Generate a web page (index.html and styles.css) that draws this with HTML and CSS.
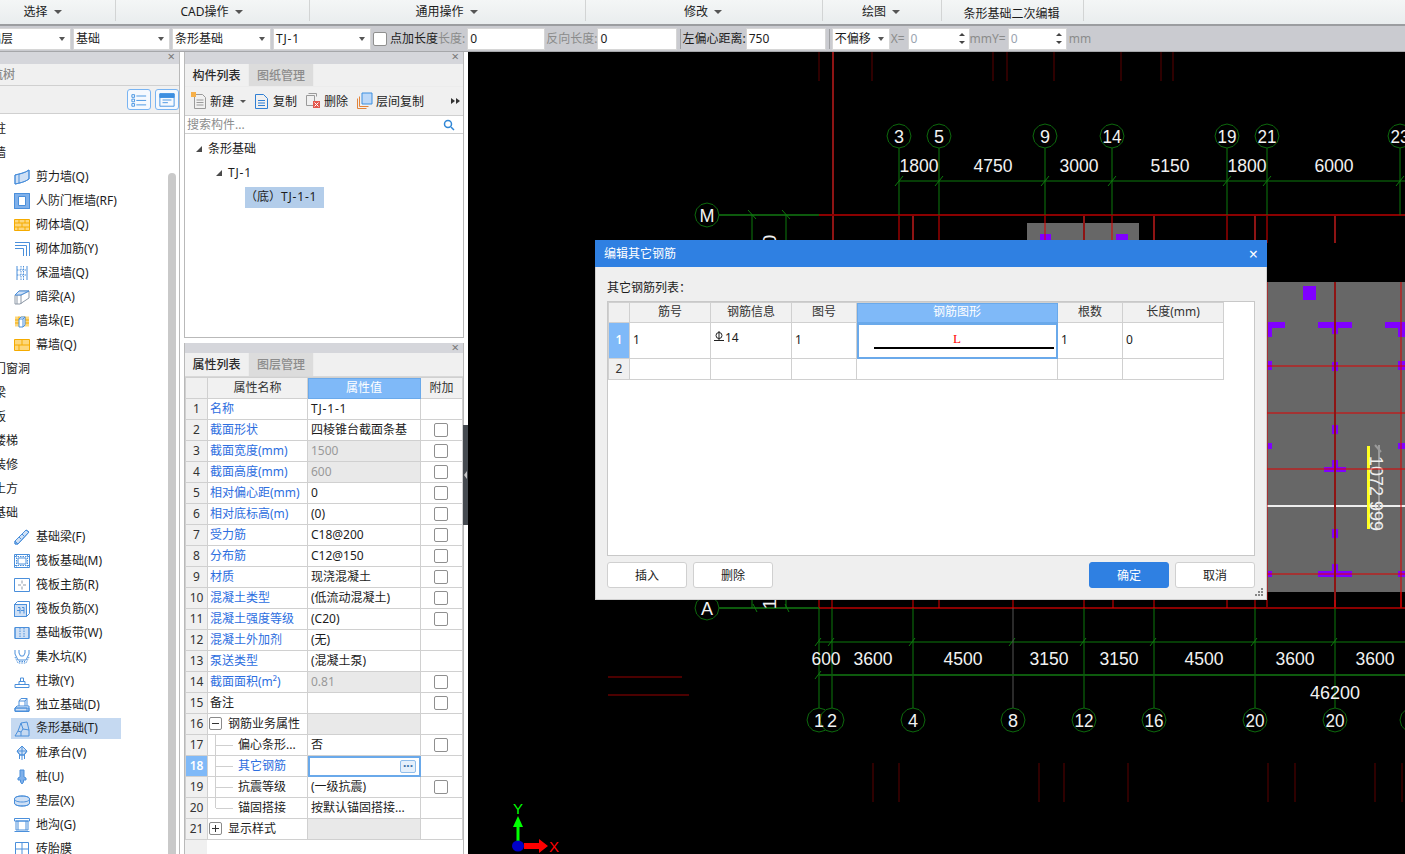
FILE: index.html
```html
<!DOCTYPE html>
<html lang="zh">
<head>
<meta charset="utf-8">
<title>编辑其它钢筋</title>
<link rel="stylesheet" href="styles.css">
</head>
<body>
<div class="app">
  <header class="ribbon">
    <div class="rib first">选择<i class="caret"></i></div>
    <div class="rib">CAD操作<i class="caret"></i></div>
    <div class="rib">通用操作<i class="caret"></i></div>
    <div class="rib">修改<i class="caret"></i></div>
    <div class="rib">绘图<i class="caret"></i></div>
    <div class="rib low">条形基础二次编辑</div>
    <div></div>
  </header>

  <div class="tools">
    <div class="combo c1"><span>基础层</span><i class="caret"></i></div>
    <div class="combo c2"><span>基础</span><i class="caret"></i></div>
    <div class="combo c2"><span>条形基础</span><i class="caret"></i></div>
    <div class="combo c2"><span class="tj">TJ-1</span><i class="caret"></i></div>
    <span class="check tchk"></span>
    <span class="lbl">点加长度</span>
    <span class="lbl mute tight">长度:</span>
    <div class="input i78">0</div>
    <span class="lbl mute">反向长度:</span>
    <div class="input i80">0</div>
    <span class="vsep"></span>
    <span class="lbl tight">左偏心距离:</span>
    <div class="input i80">750</div>
    <span class="vsep"></span>
    <div class="combo c58"><span>不偏移</span><i class="caret"></i></div>
    <span class="lbl mute tight">X=</span>
    <div class="input spin s62"><span>0</span><b class="arrows"><i></i><i></i></b></div>
    <span class="lbl mute tight">mmY=</span>
    <div class="input spin s60"><span>0</span><b class="arrows"><i></i><i></i></b></div>
    <span class="lbl mute mm">mm</span>
  </div>

  <div class="main">
    <aside class="left">
      <div class="strip"><span class="x">×</span></div>
      <div class="ltab"><span>导航树</span></div>
      <div class="ltools">
        <span class="tbtn"><svg viewBox="0 0 20 18"><path d="M2 3h3v3H2zM2 8h3v3H2zM2 13h3v3H2zM7 4.500h11M7 9.500h11M7 14.500h11"/></svg></span>
        <span class="tbtn"><svg viewBox="0 0 20 18"><path d="M2 2h16v14H2zM2 6h16M5 9h10M5 12h6"/><path class="fill" d="M2 2h16v4H2z"/></svg></span>
      </div>
      <div class="tree">
        <div class="cat"><span>柱</span></div>
        <div class="cat"><span>墙</span></div>
        <div class="it"><svg class="ico" viewBox="0 0 16 16"><path class="lf" d="M1 6C5 5 11 4 15 1v9c-4 3-9 4-14 5z"/><path d="M1 6C5 5 11 4 15 1v9c-4 3-9 4-14 5zM5 5v9"/></svg>剪力墙(Q)</div>
        <div class="it"><svg class="ico" viewBox="0 0 16 16"><path class="mf" d="M.5.500h15v15H.5z"/><path d="M.5.500h15v15H.5z"/><path class="wf" d="M4.500 3.500h7v9h-7z"/></svg>人防门框墙(RF)</div>
        <div class="it"><svg class="ico" viewBox="0 0 16 16"><path class="of" d="M.5 2.500h15v11H.5z"/><path class="ow" d="M.5 2.500h15v11H.5zM1 6h14M1 10h14M5 2.500V6M11 2.500V6M8 6v4M4 10v3.500M11 10v3.500"/></svg>砌体墙(Q)</div>
        <div class="it"><svg class="ico" viewBox="0 0 16 16"><path d="M1 1.500h14.500V15M1 4.500h11.500V15M1 7.500h8.500V15" /></svg>砌体加筋(Y)</div>
        <div class="it"><svg class="ico" viewBox="0 0 16 16"><path d="M3 1v14M13 1v14"/><path class="dot" d="M7 1v14M9.500 1v14M3 5h10M3 10h10"/></svg>保温墙(Q)</div>
        <div class="it"><svg class="ico" viewBox="0 0 16 16"><path class="gy" d="M1 6l4-4h10v7l-9 6H1zM1 6h6l8-4M7 6v9M3 6v9"/><path class="lf" d="M1 6l4-4h10L7 6z"/></svg>暗梁(A)</div>
        <div class="it"><svg class="ico" viewBox="0 0 16 16"><path class="of" d="M1 3.500h14v10H1z"/><path class="ow" d="M1 7h14M1 10h14M5 3.500V7M11 3.500V7"/><path class="wf" d="M5 6l2-2h4v8l-2 2H5z"/><path d="M5 6h4v8M9 6l2-2"/></svg>墙垛(E)</div>
        <div class="it"><svg class="ico" viewBox="0 0 16 16"><path class="of" d="M.5 2.500h15v11H.5z"/><path class="ow" d="M.5 2.500h15v11H.5zM1 8h14M8 2.500V8M5 8v5.500"/></svg>幕墙(Q)</div>
        <div class="cat"><span>门窗洞</span></div>
        <div class="cat"><span>梁</span></div>
        <div class="cat"><span>板</span></div>
        <div class="cat"><span>楼梯</span></div>
        <div class="cat"><span>装修</span></div>
        <div class="cat"><span>土方</span></div>
        <div class="cat"><span>基础</span></div>
        <div class="it"><svg class="ico" viewBox="0 0 16 16"><path class="lf" d="M1 12L12 1l3 2L4 15H1z"/><path d="M1 12L12 1l3 2L4 15H1zM1 12l3 3M5 8l2 2M8 5l2 2"/></svg>基础梁(F)</div>
        <div class="it"><svg class="ico" viewBox="0 0 16 16"><path d="M.5 1.500h15v13H.5zM4 5h8v6H4z"/><path class="dot" d="M1 3.500h14M1 12.500h14M2.500 2v12M13.500 2v12"/></svg>筏板基础(M)</div>
        <div class="it"><svg class="ico" viewBox="0 0 16 16"><path d="M.5 1.500h15v13H.5z"/><path class="gy" d="M8 3.500v3M8 9.500v3M4 8h3M9 8h3"/></svg>筏板主筋(R)</div>
        <div class="it"><svg class="ico" viewBox="0 0 16 16"><path class="lf" d="M.5 3.500h12v12H.5z"/><path d="M.5 3.500h12v12H.5zM.5 3.500l3-3h12v12l-3 3M4 6.500h2v6M6 9.500H3M8 6.500h2v6M10 9.500H7"/></svg>筏板负筋(X)</div>
        <div class="it"><svg class="ico" viewBox="0 0 16 16"><path class="lf" d="M1 2.500h14v11H1z"/><path d="M1 2.500h14v11H1z"/><path class="dot" d="M6 3v10M10 3v10"/></svg>基础板带(W)</div>
        <div class="it"><svg class="ico" viewBox="0 0 16 16"><path d="M1 1v4l3 6h8l3-6V1M5 1v3l1.500 3h3L11 4V1"/><path class="dot" d="M1 8l3 6h8l3-6M5 12.500h6"/></svg>集水坑(K)</div>
        <div class="it"><svg class="ico" viewBox="0 0 16 16"><path d="M1 11.500h14v3H1zM5 11.500V8.500h6v3M6.500 8.500V5h3v3.500"/></svg>柱墩(Y)</div>
        <div class="it"><svg class="ico" viewBox="0 0 16 16"><path class="lf" d="M1 14V11h14v3z"/><path d="M1 14.500V11l2-2h12v5.500zM1 11h12v3.500M5 9V4l2-2.500h6V9M5 4h6v5M11 4l2-2.500"/></svg>独立基础(D)</div>
        <div class="it sel"><svg class="ico" viewBox="0 0 16 16"><path d="M1 15l3-5 3-8 6-1 2 8v6zM7 2l2 6-2 3v4M4 10l3 1M9 8l6 1"/></svg>条形基础(T)</div>
        <div class="it"><svg class="ico" viewBox="0 0 16 16"><path class="lf" d="M8 1l5 5-3 4H6L3 6z"/><path d="M8 1l5 5-3 4H6L3 6zM3 6h10M8 1v14M5.500 10v4M10.500 10v4"/></svg>桩承台(V)</div>
        <div class="it"><svg class="ico" viewBox="0 0 16 16"><path class="mf" d="M6 1h4v7l2 1v2H9.500v2L8 15l-1.500-2v-2H4V9l2-1z"/></svg>桩(U)</div>
        <div class="it"><svg class="ico" viewBox="0 0 16 16"><path class="lf" d="M.5 6C.5 4 4 3 8 3s7.500 1 7.500 3v4c0 2-3.500 3-7.500 3S.5 12 .5 10z"/><path d="M.5 6C.5 4 4 3 8 3s7.500 1 7.500 3v4c0 2-3.500 3-7.500 3S.5 12 .5 10zM.5 6c0 2 3.500 3 7.500 3s7.500-1 7.500-3"/></svg>垫层(X)</div>
        <div class="it"><svg class="ico" viewBox="0 0 16 16"><path d="M.5 14.500h15M2 13V4h12v9H2M.5 4V1.500h15V4H.5M4 4v9M12 4v9"/></svg>地沟(G)</div>
        <div class="it"><svg class="ico" viewBox="0 0 16 16"><path d="M1.500 1.500h13v13h-13zM8 1.500v13M1.500 8h13"/></svg>砖胎膜</div>
      </div>
      <div class="lscroll"></div>
    </aside>

    <div class="mid">
      <section class="panel p1">
        <div class="strip"><span class="x">×</span></div>
        <div class="tabs"><span class="tab on">构件列表</span><span class="tab">图纸管理</span></div>
        <div class="mtools">
          <span class="mt m1"><svg class="tico" viewBox="0 0 16 18"><path class="dw" d="M3.500 2.500h8l3 3v11h-11zM5.500 8h7M5.500 10.500h7M5.500 13h7"/><path class="star" d="M0 0h5v5H0z"/></svg>新建<i class="caret"></i></span>
          <span class="mt m2"><svg class="tico" viewBox="0 0 16 18"><path class="bl" d="M1.500 2.500h8l4 4v10h-12zM4 8.500h7M4 11h7M4 13.500h7"/></svg>复制</span>
          <span class="mt m3"><svg class="tico" viewBox="0 0 16 18"><path class="dw" d="M1.500 3.500h8v10h-8zM3.500 1.500h8v3"/><path class="redbox" d="M8 9h7v7H8z"/><path class="wl" d="M9.500 10.500l4 4M13.500 10.500l-4 4"/></svg>删除</span>
          <span class="mt m4"><svg class="tico" viewBox="0 0 16 18"><path class="org" d="M.5 6.500v10h9M2.500 4.500v10h9"/><path class="lb" d="M5 1h10v11H5z"/></svg>层间复制</span>
          <span class="more"><i></i><i></i></span>
        </div>
        <div class="search"><span>搜索构件...</span><svg class="mag" viewBox="0 0 12 12"><circle cx="5" cy="5" r="3.500"/><path d="M8 8l3 3"/></svg></div>
        <div class="mtree">
          <div class="tn l1"><i class="tri"></i>条形基础</div>
          <div class="tn l2"><i class="tri"></i><span class="tj">TJ-1</span></div>
          <div class="tn l3"><span class="picked">（底）<span class="tj">TJ-1-1</span></span></div>
        </div>
      </section>

      <section class="panel p2">
        <div class="strip s2"><span class="x">×</span></div>
        <div class="tabs t2"><span class="tab on">属性列表</span><span class="tab">图层管理</span></div>
        <div class="twrap">
          <table class="grid props">
            <colgroup><col class="a"><col class="b"><col class="c"><col class="d"></colgroup>
            <thead><tr><th class="no"></th><th>属性名称</th><th class="hot">属性值</th><th>附加</th></tr></thead>
            <tbody>
              <tr><td class="no">1</td><td class="nm">名称</td><td class="tj">TJ-1-1</td><td></td></tr>
              <tr><td class="no">2</td><td class="nm">截面形状</td><td>四棱锥台截面条基</td><td class="ck"><span class="check"></span></td></tr>
              <tr><td class="no">3</td><td class="nm">截面宽度(mm)</td><td class="ro">1500</td><td class="ck"><span class="check"></span></td></tr>
              <tr><td class="no">4</td><td class="nm">截面高度(mm)</td><td class="ro">600</td><td class="ck"><span class="check"></span></td></tr>
              <tr><td class="no">5</td><td class="nm">相对偏心距(mm)</td><td>0</td><td class="ck"><span class="check"></span></td></tr>
              <tr><td class="no">6</td><td class="nm">相对底标高(m)</td><td>(0)</td><td class="ck"><span class="check"></span></td></tr>
              <tr><td class="no">7</td><td class="nm">受力筋</td><td>C18@200</td><td class="ck"><span class="check"></span></td></tr>
              <tr><td class="no">8</td><td class="nm">分布筋</td><td>C12@150</td><td class="ck"><span class="check"></span></td></tr>
              <tr><td class="no">9</td><td class="nm">材质</td><td>现浇混凝土</td><td class="ck"><span class="check"></span></td></tr>
              <tr><td class="no">10</td><td class="nm">混凝土类型</td><td>(低流动混凝土)</td><td class="ck"><span class="check"></span></td></tr>
              <tr><td class="no">11</td><td class="nm">混凝土强度等级</td><td>(C20)</td><td class="ck"><span class="check"></span></td></tr>
              <tr><td class="no">12</td><td class="nm">混凝土外加剂</td><td>(无)</td><td></td></tr>
              <tr><td class="no">13</td><td class="nm">泵送类型</td><td>(混凝土泵)</td><td></td></tr>
              <tr><td class="no">14</td><td class="nm">截面面积(m²)</td><td class="ro">0.81</td><td class="ck"><span class="check"></span></td></tr>
              <tr><td class="no">15</td><td class="plain">备注</td><td></td><td class="ck"><span class="check"></span></td></tr>
              <tr><td class="no">16</td><td class="grp"><i class="pm minus"></i>钢筋业务属性</td><td class="ro"></td><td></td></tr>
              <tr><td class="no">17</td><td class="kid">偏心条形...</td><td>否</td><td class="ck"><span class="check"></span></td></tr>
              <tr><td class="no act">18</td><td class="kid nm">其它钢筋</td><td class="cur"><span class="dots">···</span></td><td></td></tr>
              <tr><td class="no">19</td><td class="kid">抗震等级</td><td>(一级抗震)</td><td class="ck"><span class="check"></span></td></tr>
              <tr><td class="no">20</td><td class="kid end">锚固搭接</td><td>按默认锚固搭接...</td><td></td></tr>
              <tr><td class="no">21</td><td class="grp"><i class="pm plus"></i>显示样式</td><td class="ro"></td><td></td></tr>
            </tbody>
          </table>
        </div>
      </section>
    </div>

    <div class="split"><span class="handle"></span></div>

    <div class="canvas">
      <svg class="cad" viewBox="468 52 937 802">
        <defs>
          <polygon id="bub" points="0,-12 6,-10.400 10.400,-6 12,0 10.400,6 6,10.400 0,12 -6,10.400 -10.400,6 -12,0 -10.400,-6 -6,-10.400"/>
        </defs>
        <path class="dk" d="M819 52v29M872 52v29M993 52v29M1007 52v29M1054 52v29M1121 52v29M1161 52v29M1173 52v29M873 763v39M899 763v39M1039 763v39M1064 763v39M1128 763v39M1268 763v39M1295 763v39M1375 763v39M1402 763v39"/>
        <path class="dk2" d="M608 677h74M608 695h81"/>
        <path class="rd" d="M833 52v190"/>
        <rect class="gray" x="1027" y="223" width="112" height="20"/>
        <rect class="gray" x="1267" y="282" width="138" height="310"/>
        <path class="pur" d="M1040 234h11v8h-11zM1116 234h12v8h-12zM1303 286h13v14h-13zM1268 322h17v6h-13v9h-4zM1318 322h34v6h-14v6h-6v-6h-14zM1385 322h20v15h-7v-9h-13zM1332 362h6v9h-6zM1268 361h4v9h-4zM1398 361h7v9h-7zM1332 425h6v9h-6zM1268 443h4v6h-4zM1398 443h7v6h-7zM1332 460h6v7h8v5h-22v-5h8zM1332 529h6v9h-6zM1332 564h6v7h14v6h-34v-6h14zM1268 571h4v6h-4zM1398 571h7v6h-7z"/>
        <path class="wht" d="M1267 506h138"/>
        <path class="yel" d="M1368.500 446v83"/>
        <path class="gyl" d="M1379 445v85M1375 445l6 7M1375 529l6-5"/>
        <text class="rot" transform="translate(1370 456) rotate(90)" textLength="75" lengthAdjust="spacingAndGlyphs">1072 999</text>
        <path class="r" d="M1267 282v326M1401 282v326M1267 366h138M1267 413h138M1267 469h138M1267 574h138M899 215v28M939 215v28M1045 215v28M1112 215v28M1227 215v28M1267 215v28"/>
        <path class="rd" d="M913 215v28M1084 215v28M1154 215v28M1255 215v28M1335 215v28M1335 282v326"/>
        <path class="rt" d="M819 215h586M819 608h586"/>
        <path class="r" d="M819 600v8M832 600v8M913 600v8M939 600v8M1013 600v8M1084 600v8M1113 600v8M1154 600v8M1227 600v8M1255 600v8M1335 600v8M1401 592v16"/>
        <path class="g" d="M899 148v67M939 148v67M1045 148v67M1112 148v67M1227 148v67M1267 148v67M1400 148v67M899 181h506M895 186l8-10M935 186l8-10M1041 186l8-10M1108 186l8-10M1223 186l8-10M1263 186l8-10M1396 186l8-10"/>
        <path class="gt" d="M719 215h100M719 608h100"/>
        <path class="g" d="M752 215v30M786 215v30M748 210l8 9M782 210l8 9M752 598v10M786 598v10M753 604l4 8M785 604l4 8"/>
        <path class="g" d="M819 608v100M832 608v100M913 608v100M1084 608v100M1154 608v100M1255 608v100M1335 608v100M819 642h586M815 646l6-8M828 646l6-8M909 646l6-8M1009 646l6-8M1080 646l6-8M1150 646l6-8M1251 646l6-8M1331 646l6-8M815 679l6-8"/>
        <path class="gf" d="M1013 608v100"/>
        <path class="gt" d="M819 675h586"/>
        <g class="bubs">
          <use href="#bub" x="899" y="136"/><use href="#bub" x="939" y="136"/><use href="#bub" x="1045" y="136"/><use href="#bub" x="1112" y="136"/><use href="#bub" x="1227" y="136"/><use href="#bub" x="1267" y="136"/><use href="#bub" x="1400" y="136"/>
          <use href="#bub" x="707" y="215"/><use href="#bub" x="707" y="608"/>
          <use href="#bub" x="819" y="720"/><use href="#bub" x="832" y="720"/><use href="#bub" x="913" y="720"/><use href="#bub" x="1013" y="720"/><use href="#bub" x="1084" y="720"/><use href="#bub" x="1154" y="720"/><use href="#bub" x="1255" y="720"/><use href="#bub" x="1335" y="720"/><use href="#bub" x="1412" y="720"/>
        </g>
        <g class="ct">
          <g class="nar">
          <text x="899" y="143">3</text><text x="939" y="143">5</text><text x="1045" y="143">9</text><text x="1112" y="143" textLength="19" lengthAdjust="spacingAndGlyphs">14</text><text x="1227" y="143" textLength="19" lengthAdjust="spacingAndGlyphs">19</text><text x="1267" y="143" textLength="19" lengthAdjust="spacingAndGlyphs">21</text><text x="1400" y="143" textLength="19" lengthAdjust="spacingAndGlyphs">23</text>
          <text x="707" y="222">M</text><text x="707" y="615">A</text>
          <text x="819" y="727">1</text><text x="832" y="727">2</text><text x="913" y="727">4</text><text x="1013" y="727">8</text><text x="1084" y="727" textLength="19" lengthAdjust="spacingAndGlyphs">12</text><text x="1154" y="727" textLength="19" lengthAdjust="spacingAndGlyphs">16</text><text x="1255" y="727" textLength="19" lengthAdjust="spacingAndGlyphs">20</text><text x="1335" y="727" textLength="19" lengthAdjust="spacingAndGlyphs">20</text>
          </g>
          <text x="919" y="172" textLength="39" lengthAdjust="spacingAndGlyphs">1800</text><text x="993" y="172" textLength="39" lengthAdjust="spacingAndGlyphs">4750</text><text x="1079" y="172" textLength="39" lengthAdjust="spacingAndGlyphs">3000</text><text x="1170" y="172" textLength="39" lengthAdjust="spacingAndGlyphs">5150</text><text x="1247" y="172" textLength="39" lengthAdjust="spacingAndGlyphs">1800</text><text x="1334" y="172" textLength="39" lengthAdjust="spacingAndGlyphs">6000</text>
          <text x="826" y="665" textLength="29" lengthAdjust="spacingAndGlyphs">600</text><text x="873" y="665" textLength="39" lengthAdjust="spacingAndGlyphs">3600</text><text x="963" y="665" textLength="39" lengthAdjust="spacingAndGlyphs">4500</text><text x="1049" y="665" textLength="39" lengthAdjust="spacingAndGlyphs">3150</text><text x="1119" y="665" textLength="39" lengthAdjust="spacingAndGlyphs">3150</text><text x="1204" y="665" textLength="39" lengthAdjust="spacingAndGlyphs">4500</text><text x="1295" y="665" textLength="39" lengthAdjust="spacingAndGlyphs">3600</text><text x="1375" y="665" textLength="39" lengthAdjust="spacingAndGlyphs">3600</text>
          <text x="1335" y="699" textLength="50" lengthAdjust="spacingAndGlyphs">46200</text>
          <text transform="translate(776 240) rotate(-90)">0</text>
          <text transform="translate(776 604) rotate(-90)">1</text>
        </g>
        <path class="ax-g" d="M518 842V826"/>
        <path class="ax-gf" d="M518 816l5 11h-10z"/>
        <path class="ax-rf" d="M524 843h15v-4l9 7-9 7v-4h-15z"/>
        <ellipse class="ax-b" cx="518" cy="846" rx="6" ry="5.500"/>
        <text class="ax-y" x="518" y="814">Y</text>
        <text class="ax-x" x="549" y="852">X</text>
      </svg>
    </div>
  </div>

  <div class="dialog">
    <div class="dtitle"><span>编辑其它钢筋</span><span class="dclose">×</span></div>
    <div class="dbody">
      <div class="dlabel">其它钢筋列表：</div>
      <div class="dbox">
        <table class="grid rebar">
          <colgroup><col class="r0"><col class="r1"><col class="r2"><col class="r3"><col class="r4"><col class="r5"><col class="r6"></colgroup>
          <thead><tr><th class="no"></th><th>筋号</th><th>钢筋信息</th><th>图号</th><th class="hot">钢筋图形</th><th>根数</th><th>长度(mm)</th></tr></thead>
          <tbody>
            <tr class="tall"><td class="no act">1</td><td>1</td><td class="barcell"><svg class="bar" viewBox="0 0 10 11"><circle cx="5" cy="4.500" r="3"/><path d="M5 0v9M0 9.500h10"/></svg>14</td><td>1</td>
              <td class="cur shape"><span class="shape-l">L</span><span class="shape-line"></span></td><td>1</td><td>0</td></tr>
            <tr><td class="no">2</td><td></td><td></td><td></td><td></td><td></td><td></td></tr>
          </tbody>
        </table>
      </div>
      <div class="dbtns">
        <span class="btn">插入</span><span class="btn">删除</span>
        <span class="grow"></span>
        <span class="btn pri">确定</span><span class="btn">取消</span>
      </div>
    </div>
    <svg class="grip" viewBox="0 0 9 9"><path d="M6 0h2v2H6zM3 3h2v2H3zM6 3h2v2H6zM0 6h2v2H0zM3 6h2v2H3zM6 6h2v2H6z"/></svg>
  </div>
</div>
</body>
</html>
```
FILE: styles.css
```css
* { box-sizing: border-box; }
html, body { margin: 0; padding: 0; }
body { font: 12px/1.2 "Noto Sans", "Noto Sans CJK SC", sans-serif; color: #1c1c1c; background: #000; }
.app { position: relative; width: 1405px; height: 854px; overflow: hidden; display: flex; flex-direction: column; }
.tj { letter-spacing: .8px; }

.caret { display: inline-block; width: 0; height: 0; border-left: 4px solid transparent; border-right: 4px solid transparent; border-top: 4px solid #555; }

/* ribbon */
.ribbon { height: 26px; display: grid; grid-template-columns: 116px 194px 276px 237px 119px 142px 1fr; background: linear-gradient(#f4f6f6, #e9edee); border-bottom: 2px solid #9b9da0; }
.rib { display: flex; align-items: center; justify-content: center; gap: 6px; height: 21px; padding: 3px 2px 0 0; border-right: 1px solid #d2d4d4; }
.rib.first { padding-right: 30px; }
.rib.low { padding-top: 7px; }

/* toolbar */
.tools { height: 26px; display: flex; align-items: center; background: #cacbd0; border-bottom: 1px solid #a6a7aa; white-space: nowrap; }
.combo { height: 22px; background: #fff; border: 1px solid #d6d6d6; display: flex; align-items: center; justify-content: space-between; padding: 2px 5px 0 2px; }
.combo .caret { border-left-width: 3px; border-right-width: 3px; margin-top: -2px; }
.c1 { width: 95px; margin-left: -24px; margin-right: 2px; padding-left: 0; }
.c2 { width: 98px; margin-right: 2px; }
.c2:nth-child(2) { width: 97px; }
.c2:nth-child(3) { width: 99px; }
.c58 { width: 58px; margin: 0 1px; }
.check { display: inline-block; width: 14px; height: 14px; background: #fff; border: 1px solid #8f8f8f; border-radius: 2px; }
.tchk { margin: 0 2px 0 0; }
.lbl { margin-left: 1px; padding-top: 2px; }
.lbl.tight { margin-left: 0; }
.lbl.mm { margin-left: 2px; }
.mute { color: #8b8b8b; }
.input { height: 22px; background: #fff; border: 1px solid #d6d6d6; padding: 2px 2px 0; display: flex; align-items: center; }
.i78 { width: 78px; margin-left: 2px; }
.i80 { width: 80px; }
.vsep { width: 1px; height: 20px; background: #9fa0a3; margin: 0 1px 0 3px; }
.spin { justify-content: space-between; color: #9aa4b0; position: relative; }
.s62 { width: 62px; margin-left: 3px; }
.s60 { width: 59px; margin-left: 2px; }
.arrows { display: flex; flex-direction: column; gap: 5px; margin: -2px 2px 0 0; }
.arrows i { width: 0; height: 0; border-left: 3px solid transparent; border-right: 3px solid transparent; border-bottom: 3px solid #444; }
.arrows i + i { border-bottom: 0; border-top: 3px solid #444; }

/* main */
.main { flex: 1; display: flex; min-height: 0; background: #fff; }
.left { width: 180px; background: #fff; border-right: 1px solid #b9b9b9; position: relative; overflow: hidden; margin-right: 4px; display: flex; flex-direction: column; }
.strip { height: 12px; background: #d5d6db; position: relative; flex: none; }
.x { position: absolute; right: 4px; top: -3px; font-size: 13px; line-height: 14px; color: #777; }
.ltab { height: 22px; background: #f0f0f0; border-bottom: 1px solid #d0d0d0; color: #8a8a8a; display: flex; align-items: center; flex: none; padding-top: 2px; }
.ltab span { margin-left: -21px; font-weight: 500; }
.ltools { height: 28px; background: #f0f0f0; border-bottom: 1px solid #d0d0d0; display: flex; justify-content: flex-end; align-items: center; gap: 4px; padding-right: 0; flex: none; }
.tbtn { width: 24px; height: 21px; border: 1px solid #79b4f2; border-radius: 3px; background: #f5f9fe; display: flex; align-items: center; justify-content: center; }
.tbtn svg { width: 18px; height: 16px; fill: none; stroke: #3d8fe0; stroke-width: 1; }
.tbtn .fill { fill: #3d8fe0; }
.tree { flex: 1; padding-top: 3px; overflow: hidden; }
.cat, .it { height: 24px; display: flex; align-items: center; white-space: nowrap; }
.cat span { margin-left: -6px; }
.it { padding-left: 14px; gap: 6px; width: 121px; }
.it.sel { background: #c5d9f1; margin-left: 11px; width: 110px; padding-left: 3px; height: 21px; margin-top: 1px; margin-bottom: 2px; }
.lscroll { position: absolute; left: 168px; top: 121px; bottom: 0; width: 8px; background: #c9c9c9; border-radius: 4px 4px 0 0; }
.ico { width: 16px; height: 16px; flex: none; fill: none; stroke: #4a8fdb; stroke-width: 1; }
.ico .lf { fill: #cfe0f5; }
.ico .mf { fill: #7fb0ea; }
.ico .wf { fill: #fff; }
.ico .of { fill: #fdd77c; stroke: none; }
.ico .ow { stroke: #f5ab00; }
.ico .dot { stroke-dasharray: 1.500 1; }
.ico .gy { stroke: #8d98a6; }

/* mid column */
.mid { width: 280px; display: flex; flex-direction: column; gap: 5px; flex: none; }
.panel { background: #fff; border-left: 1px solid #b9b9b9; border-right: 1px solid #b9b9b9; display: flex; flex-direction: column; }
.p1 { height: 286px; border-bottom: 1px solid #b9b9b9; }
.p2 { flex: 1; min-height: 0; }
.tabs { height: 22px; background: #f0f0f0; display: flex; flex: none; }
.tab { width: 65px; display: flex; align-items: center; justify-content: center; color: #8c8c8c; background: #dcdcdc; font-weight: 500; border-right: 1px solid #ececec; padding-top: 2px; }
.tab.on { width: 64px; color: #2a2a2a; background: #f0f0f0; }
.s2 { height: 10px; }
.t2 { height: 24px; border-bottom: 1px solid #d8d8d8; }
.mtools { height: 29px; background: #f0f0f0; border-top: 1px solid #ececec; position: relative; display: flex; align-items: center; flex: none; padding-left: 6px; }
.mt { display: flex; align-items: center; gap: 3px; white-space: nowrap; padding-top: 2px; }
.mt svg, .mt .caret { margin-top: -2px; }
.m1 { width: 64px; }
.m1 .caret { border-left-width: 3px; border-right-width: 3px; border-top-width: 3px; margin-left: 3px; }
.m2 { width: 51px; margin-left: -1px; }
.m3 { width: 52px; }
.tico { width: 16px; height: 18px; flex: none; fill: none; stroke: #888; stroke-width: 1; }
.tico .dw { stroke: #9a9a9a; }
.tico .star { fill: #f6b04a; stroke: none; }
.tico .bl { stroke: #2f7fd4; }
.tico .redbox { fill: #e4574c; stroke: none; }
.tico .wl { stroke: #fff; }
.tico .org { stroke: #e2843b; }
.tico .lb { fill: #bcd8f8; stroke: #3d8fe0; }
.more { position: absolute; right: 3px; top: 11px; display: flex; gap: 1px; }
.more i { width: 0; height: 0; border-top: 3px solid transparent; border-bottom: 3px solid transparent; border-left: 4px solid #333; }
.search { height: 19px; background: #fff; border-top: 1px solid #d0d0d0; border-bottom: 1px solid #d0d0d0; display: flex; align-items: center; justify-content: space-between; padding: 2px 8px 0 2px; color: #8d8d8d; flex: none; }
.mag { width: 12px; height: 12px; fill: none; stroke: #2f86d6; stroke-width: 1.500; margin-top: -2px; }
.mtree { flex: 1; padding-top: 3px; }
.tn { height: 24px; display: flex; align-items: center; white-space: nowrap; }
.tri { width: 0; height: 0; border-left: 6px solid transparent; border-bottom: 6px solid #4a4a4a; margin-right: 6px; }
.l1 { padding-left: 11px; }
.l2 { padding-left: 31px; }
.l3 { padding-left: 60px; }
.picked { background: #b3cdea; height: 21px; width: 79px; display: flex; align-items: center; }

/* grids */
.grid { border-collapse: collapse; table-layout: fixed; background: #fff; }
.grid th, .grid td { border: 1px solid #d0d0d0; height: 21px; padding: 0 3px; font-weight: 400; white-space: nowrap; overflow: hidden; text-align: left; }
.grid th { background: #f1f1f1; text-align: center; color: #333; }
.grid .no { background: #f0f0f0; text-align: center; color: #333; padding: 0; }
.grid .hot { background: #7fb9f8; color: #fff; outline: 1px solid #6aa9ea; outline-offset: -1px; }
.grid .act { background: #7fb9f8; color: #fff; font-weight: 600; }
.twrap { flex: 1; background: linear-gradient(90deg, #f0f0f0 22px, #fff 22px); min-height: 0; overflow: hidden; }
.props { width: 277px; }
.props .a { width: 22px; } .props .b { width: 100px; } .props .c { width: 113px; } .props .d { width: 42px; }
.grid .nm, .grid .plain { padding-left: 2px; }
.grid .nm { color: #2d6ee0; }
.grid .ro { background: #e9e9e9; color: #999; }
.grid .ck { text-align: center; padding: 0 2px 0 0; line-height: 0; }
.grid .grp { padding-left: 1px; white-space: nowrap; }
.pm { display: inline-block; position: relative; width: 13px; height: 13px; border: 1px solid #8a8a8a; border-radius: 2px; vertical-align: -2px; margin-right: 6px; }
.pm::before { content: ""; position: absolute; left: 2px; right: 2px; top: 5px; height: 1px; background: #333; }
.plus::after { content: ""; position: absolute; top: 2px; bottom: 2px; left: 5px; width: 1px; background: #333; }
.grid .kid { position: relative; padding-left: 30px; }
.kid::before { content: ""; position: absolute; left: 7px; top: 0; bottom: 0; border-left: 1px solid #cfcfcf; }
.kid::after { content: ""; position: absolute; left: 8px; width: 17px; top: 50%; border-top: 1px solid #cfcfcf; }
.end::before { bottom: 50%; }
.grid .cur { outline: 2px solid #6aa9ea; outline-offset: -2px; position: relative; }
.dots { position: absolute; right: 4px; top: 4px; width: 16px; height: 13px; border: 1px solid #8fbdeb; border-radius: 2px; background: #e6f0fb; color: #3a6ea5; font-size: 12px; line-height: 10px; text-align: center; font-weight: 700; }

.split { width: 4px; background: #fff; position: relative; flex: none; }
.handle { position: absolute; left: -1px; top: 373px; width: 5px; height: 100px; background: #454a50; }
.handle::before { content: ""; position: absolute; left: 1px; top: 46px; border-top: 4px solid transparent; border-bottom: 4px solid transparent; border-right: 3px solid #c8c8c8; }

/* CAD */
.canvas { flex: 1; background: #000; min-width: 0; }
.cad { display: block; width: 937px; height: 802px; font-family: "Liberation Sans", sans-serif; fill: none; }
.dk { stroke: #5c0000; stroke-width: 1; }
.dk2 { stroke: #4c0000; stroke-width: 2; }
.r { stroke: #e00000; stroke-width: 1; }
.rd { stroke: #8e1414; stroke-width: 2; }
.rt { stroke: #8b0000; stroke-width: 2; }
.g { stroke: #0d7a0d; stroke-width: 1; }
.gt { stroke: #0d5a0d; stroke-width: 2; }
.gf { stroke: #555; stroke-width: 1; }
.gray { fill: #676767; }
.pur { fill: #8000ff; }
.wht { stroke: #eee; stroke-width: 2; }
.yel { stroke: #ffff20; stroke-width: 3; }
.gyl { stroke: #9a9a9a; stroke-width: 2; }
.rot { fill: #eee; font-size: 18px; }
.bubs use { stroke: #0d6a0d; fill: #000; }
.ct text { fill: #f2f2f2; font-size: 19px; text-anchor: middle; }
.ct .nar text { font-size: 18px; }
.ax-g { stroke: #00ff00; stroke-width: 3; }
.ax-gf { fill: #00ff00; }
.ax-rf { fill: #ff0000; }
.ax-b { fill: #0000c8; }
.ax-y { fill: #00ff00; font-size: 15px; text-anchor: middle; }
.ax-x { fill: #ff0000; font-size: 15px; }

/* dialog */
.dialog { position: absolute; left: 595px; top: 240px; width: 672px; height: 360px; background: #efefef; border: 1px solid #d0d0d0; border-top: 0; display: flex; flex-direction: column; }
.dtitle { height: 27px; margin: 0 -1px; background: #2f80e2; color: #fff; display: flex; align-items: center; justify-content: space-between; padding: 2px 9px 0; flex: none; }
.dclose { font-size: 16px; line-height: 16px; margin-top: -2px; }
.dbody { flex: 1; padding: 13px 11px 11px; display: flex; flex-direction: column; min-height: 0; }
.dlabel { height: 21px; line-height: 16px; }
.dbox { height: 255px; background: #fff; border: 1px solid #c8c8c8; overflow: hidden; }
.rebar { width: 615px; }
.rebar .r0 { width: 21px; } .rebar .r1 { width: 81px; } .rebar .r2 { width: 81px; } .rebar .r3 { width: 65px; } .rebar .r4 { width: 201px; } .rebar .r5 { width: 65px; } .rebar .r6 { width: 101px; }
.rebar th { height: 20px; }
.rebar .tall td { height: 36px; }
.grid .barcell { padding-bottom: 4px; }
.bar { width: 10px; height: 11px; fill: none; stroke: #222; stroke-width: 1; vertical-align: 0; margin-right: 1px; }
.grid .shape { text-align: center; position: relative; }
.shape-l { position: absolute; left: 0; right: 0; top: 8px; color: #f00; font: 13px "Liberation Serif", serif; text-align: center; }
.shape-line { position: absolute; left: 17px; right: 3px; top: 24px; height: 2px; background: #000; }
.dbtns { display: flex; gap: 6px; margin-top: 6px; }
.grow { flex: 1; }
.btn { width: 80px; height: 26px; background: #fff; border: 1px solid #d0d0d0; border-radius: 3px; display: flex; align-items: center; justify-content: center; padding-top: 2px; }
.btn.pri { background: #2f80e2; border-color: #2f80e2; color: #fff; }
.grip { position: absolute; right: 2px; bottom: 2px; width: 9px; height: 9px; fill: #888; }
```
